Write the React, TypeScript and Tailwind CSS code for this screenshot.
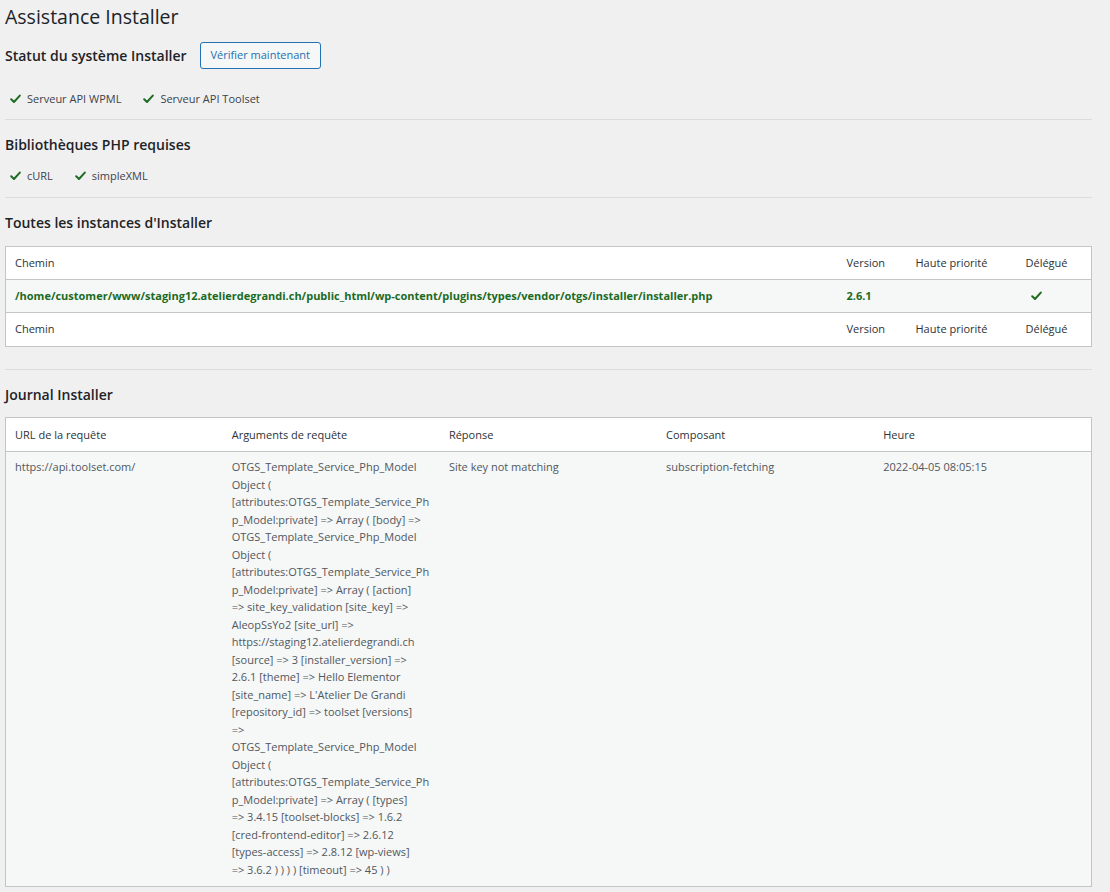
import React from 'react'

function Check({ className = '' }: { className?: string }) {
  return (
    <svg className={className} width="11" height="10" viewBox="0 0 11 10" fill="none">
      <path d="M1.2 5.2 L4 8 L9.8 1.6" stroke="#1e6b22" strokeWidth="2" strokeLinecap="round" strokeLinejoin="round" />
    </svg>
  )
}

const argLines = [
  'OTGS_Template_Service_Php_Model',
  'Object (',
  '[attributes:OTGS_Template_Service_Ph',
  'p_Model:private] => Array ( [body] =>',
  'OTGS_Template_Service_Php_Model',
  'Object (',
  '[attributes:OTGS_Template_Service_Ph',
  'p_Model:private] => Array ( [action]',
  '=> site_key_validation [site_key] =>',
  'AleopSsYo2 [site_url] =>',
  'https://staging12.atelierdegrandi.ch',
  '[source] => 3 [installer_version] =>',
  '2.6.1 [theme] => Hello Elementor',
  "[site_name] => L'Atelier De Grandi",
  '[repository_id] => toolset [versions]',
  '=>',
  'OTGS_Template_Service_Php_Model',
  'Object (',
  '[attributes:OTGS_Template_Service_Ph',
  'p_Model:private] => Array ( [types]',
  '=> 3.4.15 [toolset-blocks] => 1.6.2',
  '[cred-frontend-editor] => 2.6.12',
  '[types-access] => 2.8.12 [wp-views]',
  '=> 3.6.2 ) ) ) ) [timeout] => 45 ) )',
]

function CheckItem({ label }: { label: string }) {
  return (
    <span className="flex items-center gap-[6px]">
      <Check />
      <span>{label}</span>
    </span>
  )
}

export default function App() {
  return (
    <div className="min-h-screen bg-[#f0f0f1] pl-[5px] pr-[18px] font-['Open_Sans',sans-serif] text-[#3c434a]">
      <h1 className="h-[33px] flex items-center text-[19.5px] text-[#1d2327]">Assistance Installer</h1>

      <div className="mt-[9px] h-[27px] flex items-center gap-[13px]">
        <h2 className="text-[14px] font-semibold text-[#1d2327]">Statut du système Installer</h2>
        <button className="h-[27px] px-[10px] rounded-[3px] border border-[#2271b1] bg-[#f6f7f7] text-[11px] font-medium text-[#2271b1]">
          Vérifier maintenant
        </button>
      </div>

      <div className="mt-[20px] h-[20px] flex items-center gap-[22px] pl-[5px] text-[11px]">
        <CheckItem label="Serveur API WPML" />
        <CheckItem label="Serveur API Toolset" />
      </div>

      <div className="mt-[10px] border-t border-[#dcdcde]" />

      <h2 className="mt-[14px] h-[20px] flex items-center text-[14px] font-semibold text-[#1d2327]">Bibliothèques PHP requises</h2>

      <div className="mt-[12px] h-[20px] flex items-center gap-[22px] pl-[5px] text-[11px]">
        <CheckItem label="cURL" />
        <CheckItem label="simpleXML" />
      </div>

      <div className="mt-[11px] border-t border-[#dcdcde]" />

      <h2 className="mt-[14px] h-[20px] flex items-center text-[14px] font-semibold text-[#1d2327]">Toutes les instances d'Installer</h2>

      <table className="mt-[14px] w-full table-fixed border border-[#c3c4c7] bg-white text-[11px] text-left">
        <colgroup>
          <col />
          <col className="w-[69px]" />
          <col className="w-[110px]" />
          <col className="w-[75px]" />
        </colgroup>
        <thead>
          <tr className="h-[33px] text-[#2c3338] border-b border-[#c3c4c7]">
            <th className="font-normal px-[9px]">Chemin</th>
            <th className="font-normal px-[9px]">Version</th>
            <th className="font-normal px-[9px]">Haute priorité</th>
            <th className="font-normal px-[9px]">Délégué</th>
          </tr>
        </thead>
        <tbody>
          <tr className="h-[33px] bg-[#f6f7f7] font-bold text-[#1a6b1f]">
            <td className="px-[9px] whitespace-nowrap">/home/customer/www/staging12.atelierdegrandi.ch/public_html/wp-content/plugins/types/vendor/otgs/installer/installer.php</td>
            <td className="px-[9px]">2.6.1</td>
            <td className="px-[9px]"></td>
            <td className="px-[9px]"><Check className="ml-[5px]" /></td>
          </tr>
        </tbody>
        <tfoot>
          <tr className="h-[34px] text-[#2c3338] border-t border-[#c3c4c7]">
            <th className="font-normal px-[9px]">Chemin</th>
            <th className="font-normal px-[9px]">Version</th>
            <th className="font-normal px-[9px]">Haute priorité</th>
            <th className="font-normal px-[9px]">Délégué</th>
          </tr>
        </tfoot>
      </table>

      <div className="mt-[22px] border-t border-[#dcdcde]" />

      <h2 className="mt-[14px] h-[20px] flex items-center text-[14px] font-semibold text-[#1d2327]">Journal Installer</h2>

      <table className="mt-[13px] w-full table-fixed border border-[#c3c4c7] bg-white text-[11px] text-left">
        <thead>
          <tr className="h-[34px] text-[#2c3338] border-b border-[#c3c4c7]">
            <th className="font-normal px-[9px] pt-[2px]">URL de la requête</th>
            <th className="font-normal px-[9px] pt-[2px]">Arguments de requête</th>
            <th className="font-normal px-[9px] pt-[2px]">Réponse</th>
            <th className="font-normal px-[9px] pt-[2px]">Composant</th>
            <th className="font-normal px-[9px] pt-[2px]">Heure</th>
          </tr>
        </thead>
        <tbody>
          <tr className="bg-[#f6f7f7] text-[#50575e] align-top leading-[17.5px]">
            <td className="px-[9px] pt-[6px] pb-[8px]">https://api.toolset.com/</td>
            <td className="px-[9px] pt-[6px] pb-[8px] whitespace-nowrap">
              {argLines.map((l, i) => (
                <div key={i}>{l}</div>
              ))}
            </td>
            <td className="px-[9px] pt-[6px] pb-[8px]">Site key not matching</td>
            <td className="px-[9px] pt-[6px] pb-[8px]">subscription-fetching</td>
            <td className="px-[9px] pt-[6px] pb-[8px]">2022-04-05 08:05:15</td>
          </tr>
        </tbody>
      </table>
    </div>
  )
}
